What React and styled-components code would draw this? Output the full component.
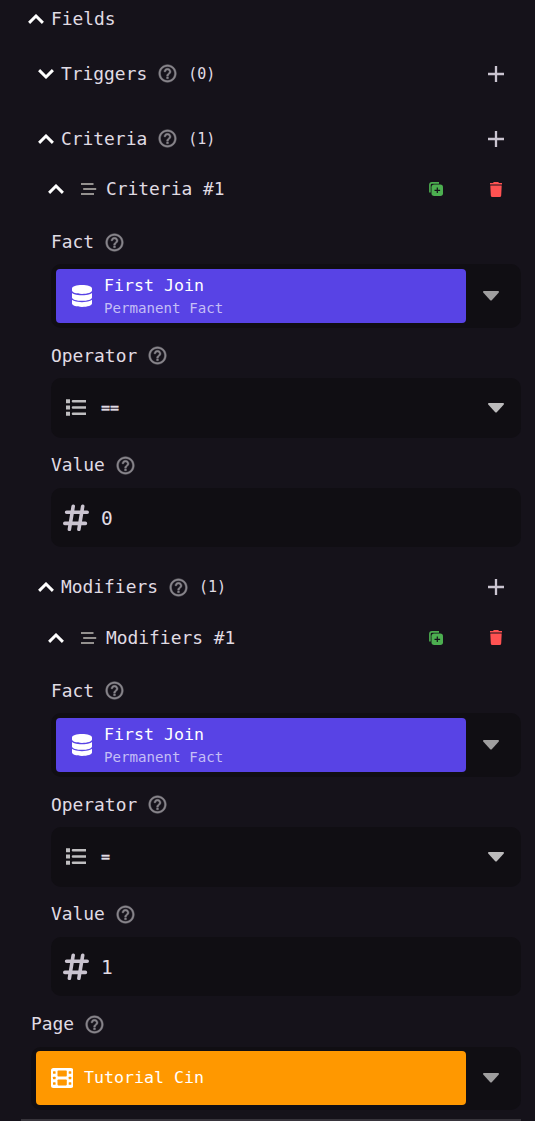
import React from "react";
import styled, { createGlobalStyle } from "styled-components";
import { MdHelpOutline } from "react-icons/md";
import { FaDatabase } from "react-icons/fa6";

const GlobalStyle = createGlobalStyle`
  body { margin: 0; background: #15121a; }
  * { box-sizing: border-box; }
`;

const Panel = styled.main`
  width: 535px;
  height: 1121px;
  overflow: hidden;
  background: #15121a;
  color: #e0dce4;
  font-family: "DejaVu Sans Mono", "Liberation Mono", monospace;
  font-size: 17.9px;
  line-height: 24px;
  white-space: pre;
`;

const Header = styled.header`
  display: flex;
  align-items: center;
  height: ${(p) => p.$height}px;
  margin-bottom: ${(p) => p.$after || 0}px;
  padding-left: ${(p) => p.$indent}px;
  padding-right: 30px;
`;

const Chevron = styled.svg`
  width: 16px;
  height: 10px;
  margin-right: ${(p) => p.$gap}px;
  flex: none;
  transform: ${(p) => (p.$open ? "none" : "rotate(180deg)")};
`;

const Help = styled(MdHelpOutline)`
  width: 21px;
  height: 21px;
  margin-left: 10px;
  color: #88858b;
  flex: none;

  path:last-child {
    stroke: currentColor;
    stroke-width: 0.5px;
  }
`;

const Count = styled.span`
  margin-left: 10px;
  font-size: 15px;
`;

const Actions = styled.div`
  display: flex;
  align-items: center;
  margin-left: auto;
`;

const Icon = styled.svg`
  width: ${(p) => p.$w}px;
  height: ${(p) => p.$h}px;
  flex: none;
`;

const Grip = styled(Icon)`
  margin-right: 9px;
`;

const Duplicate = styled(Icon)`
  margin-right: 46px;
`;

const Trash = styled(Icon)`
  margin-right: 2px;
`;

const Database = styled(FaDatabase)`
  width: 20px;
  height: 22px;
  flex: none;
`;

const Label = styled.div`
  display: flex;
  align-items: center;
  height: ${(p) => (p.$first ? 57 : 50.2)}px;
  padding-top: ${(p) => (p.$first ? 13 : 5.6)}px;
`;

const FieldGroup = styled.section`
  padding: 0 14px 0 ${(p) => p.$indent}px;
  margin-bottom: ${(p) => p.$after || 0}px;
`;

const Control = styled.div`
  display: flex;
  align-items: center;
  height: ${(p) => (p.$chip ? 63.7 : 59.7)}px;
  border-radius: 10px;
  background: #100e13;
  padding: ${(p) => (p.$chip ? "0 22px 0 5px" : "0 17px 0 12px")};
`;

const Chip = styled.div`
  display: flex;
  align-items: center;
  width: ${(p) => p.$width}px;
  height: 54px;
  padding-left: ${(p) => p.$pad}px;
  border-radius: 4px;
  color: #fff;
  background: ${(p) => p.$color};
`;

const ChipText = styled.div`
  display: flex;
  flex-direction: column;
  margin-left: ${(p) => p.$gap}px;
  padding-top: ${(p) => p.$drop || 0}px;
  font-size: 16.6px;
  line-height: 22px;
`;

const ChipNote = styled.span`
  font-size: 14.15px;
  color: #c5bef6;
`;

const CaretIcon = styled(Icon)`
  margin-left: auto;
`;

const ListIcon = styled(Icon)`
  margin: 0 15px 0 3px;
`;

const HashIcon = styled(Icon)`
  margin-right: 12px;
`;

const OperatorText = styled.span`
  font-size: 15px;
  -webkit-text-stroke: 0.3px currentColor;
`;

const ValueText = styled.span`
  padding-top: 2px;
  font-size: 19.5px;
`;

const Divider = styled.div`
  height: 3px;
  margin: 8.800px 14px 0 21px;
  background: #37343b;
`;

function Arrow({ open = true, gap = 7 }) {
  return (
    <Chevron viewBox="0 0 16 10" $open={open} $gap={gap}>
      <path d="M1.100 8.900 8 2l6.900 6.900" fill="none" stroke="#fff" strokeWidth="2.900" />
    </Chevron>
  );
}

function Caret({ tone }) {
  return (
    <CaretIcon $w={16} $h={10} viewBox="0 0 16 10">
      <path d="M1 0h14q1.600.4.6 1.700L9 9.100Q8 10.100 7 9.100L.4 1.700Q-.6.4 1 0Z" fill={tone} />
    </CaretIcon>
  );
}

function Film() {
  return (
    <Icon $w={22.3} $h={20} viewBox="0 0 22.3 20">
      <rect width="22.300" height="20" rx="2.500" fill="#fff" />
      <g fill="#ff9800">
        <rect x="6.500" y="2.600" width="9.300" height="6" rx=".8" />
        <rect x="6.500" y="11.400" width="9.300" height="6" rx=".8" />
        {[4.5, 10, 15.5].map((y) => (
          <React.Fragment key={y}>
            <rect x="2" y={y - 1.3} width="2.600" height="2.600" rx=".6" />
            <rect x="17.700" y={y - 1.3} width="2.600" height="2.600" rx=".6" />
          </React.Fragment>
        ))}
      </g>
    </Icon>
  );
}

function Section({ title, count, open }) {
  return (
    <Header $height={65} $indent={38}>
      <Arrow open={open} />
      {title}
      <Help />
      <Count>({count})</Count>
      <Actions>
        <Icon $w={18} $h={18} viewBox="0 0 18 18">
          <path d="M9 1v16M1 9h16" stroke="#cac4d0" strokeWidth="2.300" />
        </Icon>
      </Actions>
    </Header>
  );
}

function Item({ title }) {
  return (
    <Header $height={36} $indent={48}>
      <Arrow gap={17} />
      <Grip $w={16} $h={12} viewBox="0 0 16 12">
        <path d="M0 1h12.500M2.200 6h13M0 11h13" stroke="#94918f" strokeWidth="1.900" />
      </Grip>
      {title}
      <Actions>
        <Duplicate $w={14} $h={14} viewBox="0 0 14 14">
          <path d="M.9 10.500V3Q.9.900 3 .9h7" fill="none" stroke="#4caf50" strokeWidth="1.600" />
          <rect x="2.500" y="2.500" width="11.500" height="11.500" rx="2.700" fill="#4caf50" />
          <path d="M8.300 5.500v5.600M5.500 8.300h5.600" stroke="#15121a" strokeWidth="1.200" />
        </Duplicate>
        <Trash $w={14} $h={15} viewBox="0 0 14 15">
          <path
            d="M4.800 0h4.400l.8 1H13v1.600H1V1h3ZM1.300 3.500h11.400l-.5 10q-.1 1.500-1.600 1.500H3.400q-1.500 0-1.600-1.500Z"
            fill="#ff5252"
          />
        </Trash>
      </Actions>
    </Header>
  );
}

function Fact() {
  return (
    <Control $chip>
      <Chip $width={410} $pad={16} $color="#5843e5">
        <Database preserveAspectRatio="none" />
        <ChipText $gap={12} $drop={3}>
          <span>First Join</span>
          <ChipNote>Permanent Fact</ChipNote>
        </ChipText>
      </Chip>
      <Caret tone="#9f9e9f" />
    </Control>
  );
}

function Entry({ operator, value, after }) {
  return (
    <FieldGroup $indent={51} $after={after}>
      <Label $first>Fact<Help /></Label>
      <Fact />
      <Label>Operator<Help /></Label>
      <Control>
        <ListIcon $w={20} $h={17} viewBox="0 0 20 17">
          <path d="M0 2.300h4M0 8.500h4M0 14.700h4" stroke="#bfbec0" strokeWidth="4" />
          <path d="M7 2.300h12.400M7 8.500h12.400M7 14.700h12.400" stroke="#bfbec0" strokeWidth="2.600" strokeLinecap="round" />
        </ListIcon>
        <OperatorText>{operator}</OperatorText>
        <Caret tone="#bcbbbc" />
      </Control>
      <Label>Value<Help /></Label>
      <Control>
        <HashIcon $w={26} $h={27} viewBox="0 0 26 27">
          <path
            d="M3.600 8.200h20.600M1.800 19.400h20.600M10.200 2.300 6.400 25.300M19.700 2.300l-3.800 23"
            fill="none"
            stroke="#cac4d0"
            strokeWidth="3.600"
            strokeLinecap="round"
          />
        </HashIcon>
        <ValueText>{value}</ValueText>
      </Control>
    </FieldGroup>
  );
}

export default function App() {
  return (
    <Panel>
      <GlobalStyle />
      <Header $height={37} $after={4} $indent={28}><Arrow />Fields</Header>
      <Section title="Triggers" count={0} open={false} />
      <Section title="Criteria" count={1} open />
      <Item title="Criteria #1" />
      <Entry operator="==" value="0" after={7.5} />
      <Section title="Modifiers" count={1} open />
      <Item title="Modifiers #1" />
      <Entry operator="=" value="1" />
      <FieldGroup $indent={31}>
        <Label>Page<Help /></Label>
        <Control $chip>
          <Chip $width={430} $pad={15} $color="#ff9800">
            <Film />
            <ChipText $gap={10.7}>Tutorial Cin</ChipText>
          </Chip>
          <Caret tone="#9f9e9f" />
        </Control>
      </FieldGroup>
      <Divider />
    </Panel>
  );
}
